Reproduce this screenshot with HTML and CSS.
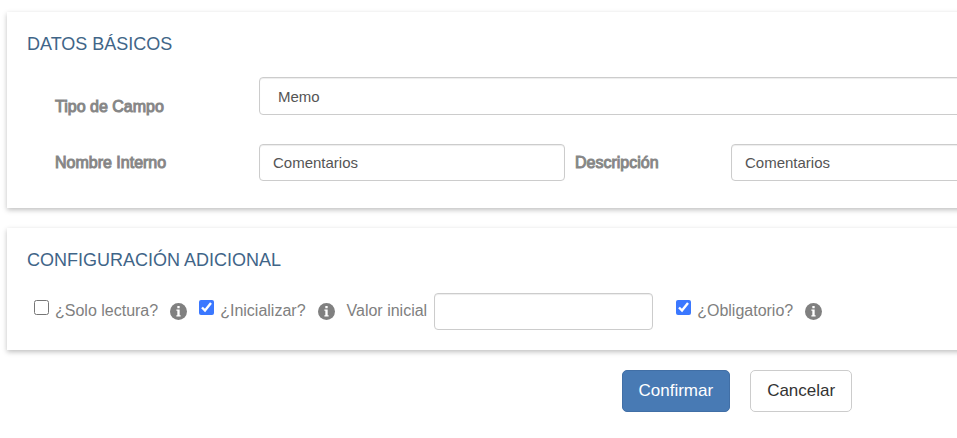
FILE: index.html
```html
<!DOCTYPE html>
<html lang="es">
<head>
  <meta charset="UTF-8">
  <meta name="viewport" content="width=device-width, initial-scale=1.0">
  <title>Campo</title>
  <link rel="stylesheet" href="styles.css">
</head>
<body>
  <form class="field-form">
    <section class="card">
      <h2 class="card-title">DATOS BÁSICOS</h2>
      <div class="form-row">
        <label class="form-label type-label" for="tipo">Tipo de Campo</label>
        <select class="form-control type-select" id="tipo">
          <option selected>Memo</option>
        </select>
      </div>
      <div class="form-row">
        <label class="form-label" for="nombre">Nombre Interno</label>
        <input class="form-control" type="text" id="nombre" value="Comentarios">
        <label class="form-label" for="descripcion">Descripción</label>
        <input class="form-control" type="text" id="descripcion" value="Comentarios">
      </div>
    </section>

    <section class="card">
      <h2 class="card-title">CONFIGURACIÓN ADICIONAL</h2>
      <div class="options">
        <div class="option">
          <input class="check" type="checkbox" id="lectura">
          <label for="lectura">¿Solo lectura?</label>
          <svg class="info" viewBox="0 0 16 16"><circle cx="8" cy="8" r="8"/><path d="M6.9 2.8h2.2v2.1H6.9zM6 6.2h3.1v5.4h.9v1.2H6v-1.2h.9V7.4H6z"/></svg>
        </div>
        <div class="option">
          <input class="check" type="checkbox" id="inicializar" checked>
          <label for="inicializar">¿Inicializar?</label>
          <svg class="info" viewBox="0 0 16 16"><circle cx="8" cy="8" r="8"/><path d="M6.9 2.8h2.2v2.1H6.9zM6 6.2h3.1v5.4h.9v1.2H6v-1.2h.9V7.4H6z"/></svg>
        </div>
        <div class="option initial-value">
          <label for="valor">Valor inicial</label>
          <input class="form-control" type="text" id="valor">
        </div>
        <div class="option">
          <input class="check" type="checkbox" id="obligatorio" checked>
          <label for="obligatorio">¿Obligatorio?</label>
          <svg class="info" viewBox="0 0 16 16"><circle cx="8" cy="8" r="8"/><path d="M6.9 2.8h2.2v2.1H6.9zM6 6.2h3.1v5.4h.9v1.2H6v-1.2h.9V7.4H6z"/></svg>
        </div>
      </div>
    </section>

    <div class="actions">
      <button class="btn btn-primary" type="submit">Confirmar</button>
      <button class="btn" type="button">Cancelar</button>
    </div>
  </form>
</body>
</html>
```

FILE: styles.css
```css
* {
  box-sizing: border-box;
}

body {
  margin: 0;
  overflow-x: hidden;
  background-color: #fff;
  color: #808080;
  font-family: "Liberation Sans", Arial, sans-serif;
  font-size: 16px;
  line-height: 20px;
}

.field-form {
  padding: 12px 0 0 7px;
}

/* the cards run past the right edge of the window */
.card {
  margin: 0 -20px 20px 0;
  padding: 22px 0 20px 20px;
  background-color: #fff;
  box-shadow: 0 2px 5px rgba(0, 0, 0, 0.25);
}

.card-title {
  margin: 0;
  color: #3f6588;
  font-size: 18px;
  font-weight: normal;
  line-height: 20px;
}

.form-row {
  display: grid;
  grid-template-columns: 194px 306px 146px 1fr;
  column-gap: 10px;
  align-items: center;
  padding-left: 28px;
  margin-top: 23px;
}

.form-row + .form-row {
  margin: 29px 0 7px;
}

.form-label {
  line-height: 16px;
  -webkit-text-stroke: 1px #888;
}

.type-label {
  align-self: end;
}

.form-control {
  width: 100%;
  height: 37px;
  padding: 0 13px;
  border: 1px solid #ccc;
  border-radius: 4px;
  background-color: #fff;
  box-shadow: inset 0 1px 1px rgba(0, 0, 0, 0.075);
  color: #555;
  font-family: inherit;
  font-size: 15px;
}

.type-select {
  grid-column: 2 / -1;
  height: 38px;
  padding: 0 18px;
  appearance: none;
}

.options {
  display: flex;
  align-items: center;
  gap: 12px;
  margin-top: 23px;
  padding-left: 7px;
}

.option {
  display: flex;
  align-items: center;
}

.option label {
  padding-bottom: 2px;
}

.check {
  width: 15px;
  height: 15px;
  margin: 0 6px 8px 0;
  accent-color: #3b78ff;
}

.info {
  width: 17px;
  height: 17px;
  margin-left: 12px;
  fill: #808080;
}

.info path {
  fill: #fff;
}

.initial-value {
  gap: 7px;
  margin-right: 11px;
}

.initial-value .form-control {
  width: 219px;
}

.actions {
  display: flex;
  gap: 20px;
  padding-left: calc(65% - 3px);
}

.btn {
  height: 42px;
  padding: 0 16px;
  border: 1px solid #ccc;
  border-radius: 5px;
  background-color: #fff;
  color: #333;
  font-family: inherit;
  font-size: 17px;
}

.btn-primary {
  border-color: #416fa6;
  background-color: #487ab4;
  color: #fff;
}
```
